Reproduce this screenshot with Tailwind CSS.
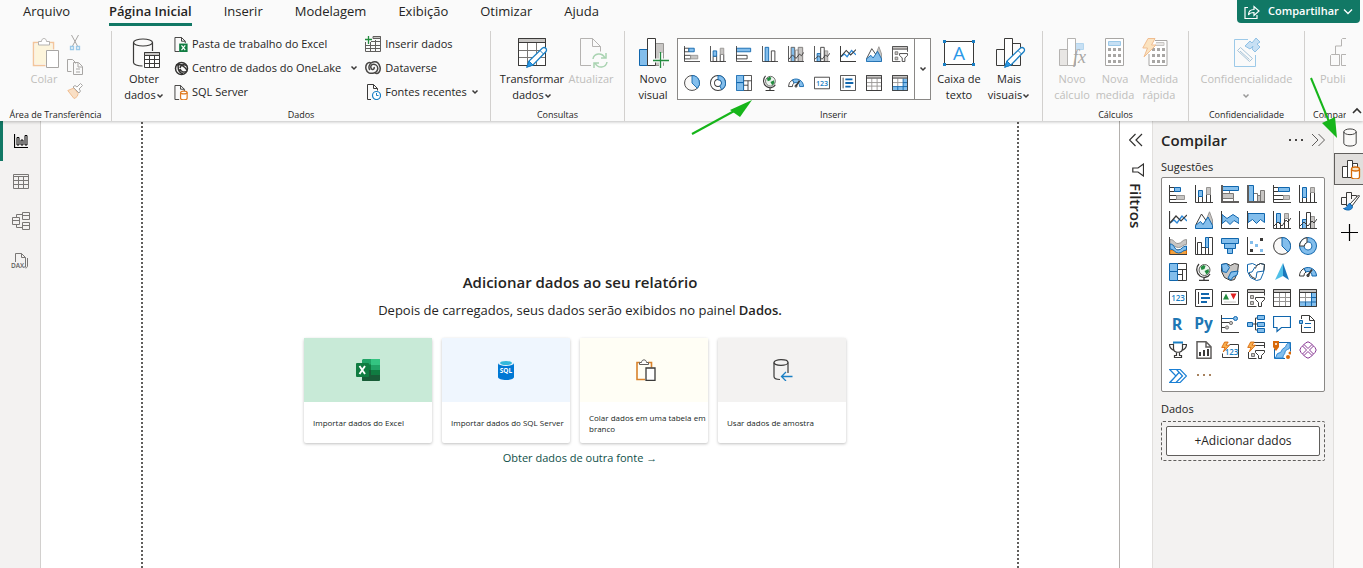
<!DOCTYPE html>
<html lang="pt-BR">
<head>
<meta charset="utf-8">
<meta name="viewport" content="width=device-width, initial-scale=1">
<title>Relatório</title>
<script src="https://cdn.jsdelivr.net/npm/@tailwindcss/browser@4"></script>
</head>
<body class="flex h-screen flex-col overflow-hidden bg-white font-['Open_Sans','Noto_Sans',sans-serif] text-[11px] text-[#252423]">

<!-- Icon library -->
<svg class="hidden" fill="none" stroke="#3b3a39" aria-hidden="true">
  <symbol id="sbar" viewBox="0 0 18 18"><path d="M.5 2.5h5v4h-5zM.5 10.5h7v4h-7z"/><path d="M5.5 2.5h6v4h-6z" fill="#83beec" stroke="#1066ad"/><path d="M7.5 10.5h8v4h-8z" fill="#c8c6c4" stroke="#979593"/><path d="M.5 0v17.5H18"/></symbol>
  <symbol id="scol" viewBox="0 0 18 18"><path d="M3.5 11.5h4v6h-4zM11.5 9.5h4v8h-4z"/><path d="M3.5 5.5h4v6h-4z" fill="#83beec" stroke="#1066ad"/><path d="M11.5 2.5h4v7h-4z" fill="#c8c6c4" stroke="#979593"/><path d="M.5 0v17.5H18"/></symbol>
  <symbol id="cbar" viewBox="0 0 18 18"><path d="M.5 10.5h12v4H.5z"/><path d="M.5 2.5h16v4H.5z" fill="#83beec" stroke="#1066ad"/><path d="M.5 0v17.5H18"/></symbol>
  <symbol id="ccol" viewBox="0 0 18 18"><path d="M10.5 5.500h4v12h-4z"/><path d="M3.500 1.500h4v16h-4z" fill="#83beec" stroke="#1066ad"/><path d="M.5 0v17.5H18"/></symbol>
  <symbol id="cbar2" viewBox="0 0 18 18"><path d="M.5 5.500h8v3h-8zM.5 13.500h12v3h-12z" fill="#fff" stroke="#797775"/><path d="M.5 8.500h12v5h-12z" fill="#c8c6c4" stroke="#797775"/><path d="M.5 1.500h17v4H.5z" fill="#83beec" stroke="#1066ad"/><path d="M1 0v17H18" stroke="#605e5c" stroke-width="2"/></symbol>
  <symbol id="ccol2" viewBox="0 0 18 18"><path d="M6.500 8.500h4v8h-4z" fill="#fff" stroke="#797775"/><path d="M10.500 10.500h3v6h-3zM13.500 5.500h4v11h-4z" fill="#c8c6c4" stroke="#797775"/><path d="M1.500.5h5v16h-5z" fill="#83beec" stroke="#1066ad"/><path d="M1 0v17H18" stroke="#605e5c" stroke-width="2"/></symbol>
  <symbol id="pbar" viewBox="0 0 18 18"><path d="M.5 2.500h5v4h-5zM.5 10.500h10v4h-10z"/><path d="M5.500 2.500h11v4h-11z" fill="#83beec" stroke="#1066ad"/><path d="M10.500 10.500h6v4h-6z" fill="#c8c6c4" stroke="#979593"/><path d="M.5 0v17.5H18"/></symbol>
  <symbol id="pcol" viewBox="0 0 18 18"><path d="M3.500 12.500h4v5h-4zM11.500 7.500h4v10h-4z"/><path d="M3.500 2.500h4v10h-4z" fill="#83beec" stroke="#1066ad"/><path d="M11.500 2.500h4v5h-4z" fill="#c8c6c4" stroke="#979593"/><path d="M.5 0v17.5H18"/></symbol>
  <symbol id="line" viewBox="0 0 18 18"><path d="M1 12l4-3 3 3 5-7 5 5" stroke="#2b88d8" stroke-width="1.400"/><path d="M1 12l6-7 5 5 6-6M.5 0v17.5H18" stroke-width="1.200"/></symbol>
  <symbol id="area" viewBox="0 0 18 18"><path d="M8 17L14.500.8 17.500 9v8z" fill="#c8c6c4" stroke="#979593"/><path d="M.5 14.500L6.500 3l7 10" fill="#fff"/><path d="M.5 17.500v-3l5-4 2.500 3 5-7.500 4.500 8.500v3z" fill="#83beec" stroke="#1066ad"/></symbol>
  <symbol id="sarea" viewBox="0 0 18 18"><path d="M1 3.500l5 4 6-4 6 4v5l-5-3-4 4-4-4-4 3z" fill="#83beec" stroke="#1066ad"/><path d="M.5 0v17.500H18"/></symbol>
  <symbol id="parea" viewBox="0 0 18 18"><path d="M1 2.500h16.500v9l-4-3-4 4-4-4-4.500 3z" fill="#83beec" stroke="#1066ad"/><path d="M.5 0v17.500H18"/></symbol>
  <symbol id="lstack" viewBox="0 0 18 18"><path d="M3.500 11.500h4v6h-4zM11.500 7.500h4v10h-4z" fill="#fff"/><path d="M3.500 2.500h4v9h-4z" fill="#83beec" stroke="#1066ad"/><path d="M11.500 2.500h4v5h-4z" fill="#c8c6c4" stroke="#979593"/><path d="M.5 0v17.500H18M1 15l4-4 4 4 4-6 2 2 3-4"/></symbol>
  <symbol id="lstack2" viewBox="0 0 18 18"><path d="M3.500 1.500h4v16h-4z" fill="#83beec" stroke="#605e5c"/><path d="M8.500 4.500h3v13h-3z" fill="#f3f2f1" stroke="#979593"/><path d="M11.500 1.500h5v16h-5z" fill="#c8c6c4" stroke="#797775"/><path d="M.5 0v17.500H18M1 15l4-5 4 4 4-5 2 2 3-4"/></symbol>
  <symbol id="lclus" viewBox="0 0 18 18"><path d="M3.500 8.500h4v9h-4z" fill="#83beec" stroke="#1066ad"/><path d="M11.500 5.500h4v12h-4z" fill="#c8c6c4" stroke="#979593"/><path d="M7.500 1.500h4v16h-4z" fill="#fff"/><path d="M.5 0v17.500H18M1 15l4-4 4 4 4-5 2 2 3-4"/></symbol>
  <symbol id="ribbon" viewBox="0 0 18 18"><path d="M1 2.500c5 0 4 4 8 4s4-4 8.500-4v5c-4 0-4 3-8 3s-4-3-8.500-3z" fill="#c8c6c4" stroke="#979593"/><path d="M1 13h16.500v4.500H1z" fill="#f2a03d" stroke="#d86b06"/><path d="M1 7c5 0 4 6 8 6s4-4 8.500-4v4c-4 0-4 3-8 3s-4-4-8.500-4z" fill="#83beec" stroke="#1066ad"/><path d="M.5 0v17.500H18"/></symbol>
  <symbol id="wfall" viewBox="0 0 18 18"><path d="M2.500 5.500h4v12h-4zM13.500.5h4v17h-4z" fill="#fff"/><path d="M10.500.5h3v10h-3z" fill="#83beec" stroke="#1066ad"/><path d="M.5 0v17.500H18M6.500 10.500h4v7"/></symbol>
  <symbol id="funnel" viewBox="0 0 18 18"><path d="M.5 1.500h17v5h-17zM3.500 6.500h11v5h-11zM6.500 11.500h5v5h-5z" fill="#83beec" stroke="#1066ad"/></symbol>
  <symbol id="scatter" viewBox="0 0 18 18"><path d="M.5 0v17.500H18"/><path d="M3 4h3v3H3zM8 7h3v3H8zM13 12h3v3h-3z" fill="#83beec" stroke="none"/><path d="M13 1h3v3h-3zM3 12h3v3H3z" fill="#3b3a39" stroke="none"/></symbol>
  <symbol id="pie" viewBox="0 0 18 18"><circle cx="9" cy="9" r="8.400" fill="#faf9f8"/><path d="M9 .6V9l6 6A8.400 8.400 0 0 0 9 .6z" fill="#83beec" stroke="#1066ad"/></symbol>
  <symbol id="donut" viewBox="0 0 18 18"><circle cx="9" cy="9" r="6.200" stroke="#1066ad" stroke-width="5.600"/><circle cx="9" cy="9" r="6.200" stroke="#83beec" stroke-width="3.600"/><path d="M.6 9A8.400 8.400 0 0 1 8 .6v5A3.600 3.600 0 0 0 5.400 9z" fill="#fff"/></symbol>
  <symbol id="donut2" viewBox="0 0 18 18"><circle cx="9" cy="9" r="6.200" stroke="#3b3a39" stroke-width="5.600"/><circle cx="9" cy="9" r="6.200" stroke="#fff" stroke-width="3.600"/><path d="M9 .6A8.400 8.400 0 0 1 13 16.400l-2-4.200A3.600 3.600 0 0 0 9 5.400z" fill="#83beec" stroke="#1066ad"/></symbol>
  <symbol id="tree" viewBox="0 0 18 18"><path d="M8.500.5h9v17h-9zM8.500 6.500h9M13.500 6.500v11M8.500 11.500h5" fill="#fff"/><path d="M.5.5h8v8h-8zM.5 8.500h8v9h-8z" fill="#83beec" stroke="#1066ad"/></symbol>
  <symbol id="globe" viewBox="0 0 18 18"><circle cx="9.500" cy="7" r="5.500" fill="#edf5ee" stroke="#605e5c"/><path d="M5.500 4l3-2 2 1-1 3-3 1zM9.500 8l4-2 .5 3-2.500 2.500z" fill="#238c3f" stroke="none"/><path d="M4 1a8 8 0 0 0 1 12c3 2 8 2 10-2M9 14v3M4 17.500h10" stroke-width="1.300"/></symbol>
  <symbol id="fmap" viewBox="0 0 18 18"><path d="M.5 1.500l5-1 4 2 4-2 4 1-1 8-3 7-4 1-6-3-3-6z" fill="#c8c6c4"/><path d="M.5 1.500l5-1 3 4-3 5-4-1zM10 9l7-1-1 4-4 2-2 3-3-2z" fill="#83beec" stroke="#1066ad"/></symbol>
  <symbol id="smap" viewBox="0 0 18 18"><path d="M.5 1.500l5-1 4 2 4-2 4 1-1 8-3 7-4 1-6-3-3-6z" fill="#fff" stroke="#1066ad"/><path d="M8 4l-3 5-3 .5M9 15l1-6 7-1" stroke="#1066ad"/><path d="M8.500 5.500l1-3 4-2 4 1-.5 6M2 10l3 4 4 2"/></symbol>
  <symbol id="azure" viewBox="0 0 18 18"><path d="M10 0L2 17l8-4z" fill="#50c0e8" stroke="none"/><path d="M10 0l6 17-6-4z" fill="#1a78bc" stroke="none"/></symbol>
  <symbol id="gauge" viewBox="0 0 18 18"><path d="M.5 13A8.500 8.500 0 0 1 5 5.500l2 3.500a4 4 0 0 0-2 4z" fill="#fff"/><path d="M5 5.500A8.500 8.500 0 0 1 17.500 13H13a4 4 0 0 0-6-4z" fill="#83beec" stroke="#1066ad"/><path d="M8.500 13L13 6.500" stroke-width="1.800"/><circle cx="9" cy="12.500" r="1.200"/></symbol>
  <symbol id="card" viewBox="0 0 18 18"><path d="M.5 2.500h17v13h-17z" fill="#fff"/><text x="9" y="12" text-anchor="middle" font-family="Open Sans" font-size="8" font-weight="600" fill="#1a7fc4" stroke="none">123</text></symbol>
  <symbol id="multi" viewBox="0 0 18 18"><path d="M.5.5h17v17h-17zM3.500 3v12" fill="#fff"/><path d="M6 5h8M6 9h9M6 13h6" stroke="#1066ad" stroke-width="2"/></symbol>
  <symbol id="kpi" viewBox="0 0 18 18"><path d="M.5 2.500h17v13h-17z" fill="#fff"/><path d="M2 10.500l3-6 3 6z" fill="#238c3f" stroke="none"/><path d="M9.500 4.500h6l-3 6z" fill="#e02020" stroke="none"/><path d="M3 13h12" stroke="#c8c6c4"/></symbol>
  <symbol id="slicer" viewBox="0 0 18 18"><path d="M.5.5h17v3h-17z" fill="#c8c6c4"/><path d="M.5 3.500v14h9M17.500 3.500v3"/><path d="M3.500 6.500h3v3h-3zM3.500 12.500h3v3h-3z" fill="#c8c6c4" stroke="#797775"/><path d="M8.500 8.500h9v2l-3 3v4h-3v-4l-3-3z" fill="#fff"/></symbol>
  <symbol id="table" viewBox="0 0 18 18"><path d="M.5.5h17v17h-17z" fill="#fff"/><path d="M.5 8.500h17M.5 12.500h17M6.500 4v13M12.500 4v13" stroke="#979593"/><path d="M.5.5h17v3h-17z" fill="#c8c6c4"/><path d="M.5 3v14.500h17V3"/></symbol>
  <symbol id="matrix" viewBox="0 0 18 18"><path d="M.5.5h17v17h-17z" fill="#fff"/><path d="M12.500 4h5v13.500H.5v-4h12z" fill="#83beec" stroke="none"/><path d="M.5 8.500h12M6.500 4v9" stroke="#979593"/><path d="M12.500 4v13.500M.5 13h17M12.500 8.500h5M6.500 13v4.500" stroke="#1066ad"/><path d="M.5.5h17v3h-17z" fill="#c8c6c4"/><path d="M.5 3v14.500h17V3"/></symbol>
  <symbol id="rlang" viewBox="0 0 18 18"><text x="8" y="15" text-anchor="middle" font-family="Open Sans" font-size="16" font-weight="700" fill="#2077b4" stroke="none">R</text></symbol>
  <symbol id="py" viewBox="0 0 18 18"><text x="8.500" y="13.500" text-anchor="middle" font-family="Open Sans" font-size="15.500" font-weight="700" fill="#2077b4" stroke="none">Py</text></symbol>
  <symbol id="infl" viewBox="0 0 18 18"><path d="M.5 0v17.500H18M.5 7.500h8M.5 12.500h4"/><path d="M1 3.500h11" stroke="#1066ad"/><circle cx="14.500" cy="3.500" r="2" fill="#83beec" stroke="#1066ad"/><circle cx="10" cy="8" r="1.600" fill="#c8c6c4" stroke="#797775"/><circle cx="6" cy="12.500" r="1.600" fill="#c8c6c4" stroke="#797775"/></symbol>
  <symbol id="dtree" viewBox="0 0 18 18"><path d="M5 9h6M8.500 3v12M8.500 3h3M8.500 15h3"/><path d="M.5 7.500h5v4h-5zM10.500.5h7v4h-7zM10.500 7.500h7v4h-7zM10.500 13.500h7v4h-7z" fill="#83beec" stroke="#1066ad"/></symbol>
  <symbol id="qa" viewBox="0 0 18 18"><path d="M.5 1.500h17v11h-9l-4.500 4v-4h-3.500z" fill="#fff" stroke="#1066ad" stroke-width="1.200"/></symbol>
  <symbol id="narr" viewBox="0 0 18 18"><path d="M2.500 4V.5h8l5 5v12h-13v-8M10.500.5v5h5"/><path d="M.5 5.500h3v3h-3z" fill="#83beec" stroke="#1066ad"/><path d="M6 8.500h6M5 12.500h7" stroke="#1066ad"/></symbol>
  <symbol id="trophy" viewBox="0 0 18 18"><path d="M4.500 2.500v5c0 5 9 5 9 0v-5M4.500 3.500h-4c0 4 2 5 5 6M13.500 3.500h4c0 4-2 5-5 6M7.500 11v3.500h-2v2h7v-2h-2V11" stroke-width="1.200"/><path d="M4 1.500h10" stroke="#1a7fc4" stroke-width="2"/></symbol>
  <symbol id="prep" viewBox="0 0 18 18"><path d="M2 .8h9l5 5v11.400H2zM11 1v5h5" fill="#fff" stroke="#605e5c" stroke-width="1.500"/><path d="M5 15v-4M9 15V9M13 15V8" stroke-width="2"/></symbol>
  <symbol id="bolt" viewBox="0 0 10 12"><path d="M4 .5h4L5.500 4h4l-7 7.500 2-5H.8z" fill="#f9b050" stroke="#d8690a"/></symbol>
  <symbol id="bcard" viewBox="0 0 18 18"><path d="M8.500 3.500h9v13h-16v-4" fill="#fff"/><text x="10.500" y="14" text-anchor="middle" font-family="Open Sans" font-size="8" font-weight="600" fill="#1a7fc4" stroke="none">123</text><use href="#bolt" x="0" y="0" width="9" height="12"/></symbol>
  <symbol id="bslicer" viewBox="0 0 18 18"><path d="M7 1.500h10.500v3H7M1.500 11v6.500h8M17.500 4v3"/><path d="M4.500 12.500h3v3h-3z" fill="#c8c6c4" stroke="#797775"/><path d="M8.500 9.500h9v2l-3 3v3h-3v-3l-3-3z" fill="#fff"/><use href="#bolt" x="0" y="0" width="9" height="12"/></symbol>
  <symbol id="arcgis" viewBox="0 0 18 18"><path d="M2 1.500h15.500v9M1.500 8v9.500H12" stroke="#1066ad"/><path d="M17 2c-5 0-3 4-6 5s-2 5-5 5-2 4-4 5h8c0-4 2-3 2-6s5-2 5-5z" fill="#83beec" stroke="#2b88d8"/><path d="M0 0h6v6L3 10 0 6z" fill="#d8690a" stroke="none"/><circle cx="3" cy="3" r="1" fill="#fff" stroke="none"/><circle cx="17" cy="12" r="1.500" fill="#d8690a" stroke="none"/><circle cx="15" cy="16" r="2" fill="#d8690a" stroke="none"/></symbol>
  <symbol id="papps" viewBox="0 0 18 18"><path d="M6.500 2L9 .8 11.500 2 16 6.500l1.200 2.500-1.200 2.500-4.500 4.500L9 17.200 6.500 16 2 11.500.8 9 2 6.500zM5 3.500L9 7.500l4-4M5 14.500l4-4 4 4M3.500 5L7.500 9l-4 4M14.500 5l-4 4 4 4" stroke="#8a3a95"/></symbol>
  <symbol id="pauto" viewBox="0 0 18 18"><path d="M.7 2.500h10.500L17.500 9l-6.300 6.500H.7L7 9zM7.500 2.500L13.500 9 7 15.500M10 5.500L1 15.500" stroke="#1a7fd4" stroke-width="1.200"/></symbol>
  <symbol id="more" viewBox="0 0 18 18"><path d="M2 8h2M8 8h2M14 8h2" stroke="#8a5a2b" stroke-width="1.500"/></symbol>
  <symbol id="chev" viewBox="0 0 8 6"><path d="M1.500 1.500L4 4l2.500-2.500" stroke="#3b3a39" stroke-width="1.500"/></symbol>
  <symbol id="cyl" viewBox="0 0 16 20"><ellipse cx="8" cy="4" rx="6.500" ry="3"/><path d="M1.500 4v12c0 4 13 4 13 0V4"/></symbol>
  <symbol id="pencil" viewBox="0 0 22 22"><path d="M1 21l2-6L16.500 2c2.500-1.500 5 1 3.500 3.500L7 19z" fill="#fff" stroke="#1a7fc4" stroke-width="1.300"/><path d="M1 21l2-6 4 4z" fill="#2b98e8" stroke="#1a7fc4"/><path d="M14 4.500L17.500 8" stroke="#1a7fc4"/></symbol>
</svg>

<header class="relative z-10 shrink-0 bg-[#fafafa] shadow-[0_1px_3px_rgba(0,0,0,0.25)]">
  <div class="flex items-start justify-between">
    <nav class="flex h-[26px] items-start pl-[23px] text-[13px] leading-[23px]" aria-label="Guias">
      <button class="mr-[39px]">Arquivo</button>
      <button class="mr-8 border-b-3 border-[#117865] font-semibold">Página Inicial</button>
      <button class="mr-8">Inserir</button>
      <button class="mr-8">Modelagem</button>
      <button class="mr-8">Exibição</button>
      <button class="mr-8">Otimizar</button>
      <button>Ajuda</button>
    </nav>
    <button class="mr-[3px] flex h-[23px] w-[123px] items-center gap-2 rounded-b-sm bg-[#117865] pl-[7px] text-[11px] font-semibold text-white">
      <svg class="size-4" viewBox="0 0 16 16" fill="none" stroke="#fff" stroke-width="1.200"><path d="M4 3.500H1v11h12V11M4.500 11c0-4 2-5.500 5.500-5.500V2.500L15 7l-5 4.500V8.500c-3 0-4.500.5-5.500 2.500z"/></svg>
      <span class="whitespace-nowrap">Compartilhar</span>
      <svg class="-ml-1 h-2 w-2.5 shrink-0" viewBox="0 0 10 7" fill="none" stroke="#fff" stroke-width="1.300"><path d="M1 1l4 4 4-4"/></svg>
    </button>
  </div>

  <div class="flex items-start overflow-hidden pt-[5px]">
    <section class="flex h-[90px] w-[112px] shrink-0 flex-col justify-between border-r border-[#d2d0ce] pt-[7px]" aria-label="Área de Transferência">
      <div class="flex pl-7">
        <button class="flex w-8 flex-col items-center gap-[3px] leading-4 text-[#c0bebc]" disabled>
          <svg class="ml-1 h-[30px] w-7" viewBox="0 0 28 30" fill="none"><path d="M6 4.500H1.500v23h12M17 4.500h4.500v7" stroke="#f3c59b" stroke-width="1.500"/><path d="M3 6h17v6h-6v14H3z" fill="#fdf5dc"/><path d="M6.500 7V3.500h3c0-4 5-4 5 0h3V7z" fill="#fff" stroke="#b5b3b1"/><path d="M14.500 12.500h12v17h-12z" fill="#fff" stroke="#a8a6a4"/></svg>
          <span>Colar</span>
        </button>
        <div class="-mt-[3px] ml-[7px] flex flex-col gap-2">
          <button aria-label="Recortar" class="flex size-4 justify-center" disabled><svg class="size-4" viewBox="0 0 16 16" fill="none"><path d="M4.500 0l6 11M11.500 0l-6 11" stroke="#a8a6a4"/><path d="M3.500 11.500h3v3h-3zM9.500 11.500h3v3h-3z" stroke="#9cc9e8" stroke-width="1.300"/></svg></button>
          <button aria-label="Copiar" class="flex size-4" disabled><svg class="size-4" viewBox="0 0 16 16" fill="none" stroke="#a8a6a4"><path d="M4.500 12.500h-4V.5h5l3 3v1M6.500 3.500h5l4 4v8h-9zM11 4v4h4M9 10h4M9 13h4"/></svg></button>
          <button aria-label="Pincel" class="flex size-4" disabled><svg class="size-4" viewBox="0 0 16 16" fill="none"><path d="M7 5L.8 7.500 7 15.500c3-1 4-3 4-5z" fill="#f9dfc5" stroke="#f0bd90"/><path d="M6 4l6 6 1.500-2-1.500-2 3.500-3.500-2-2L10 4 8 2.500z" fill="#fff" stroke="#a8a6a4"/></svg></button>
        </div>
      </div>
      <div class="text-center text-[9px] leading-3">Área de Transferência</div>
    </section>

    <section class="flex h-[90px] w-[379px] shrink-0 flex-col justify-between border-r border-[#d2d0ce] pt-[7px]" aria-label="Dados">
      <div class="flex pl-[7px]">
        <button class="flex w-[50px] flex-col items-center gap-[3px] leading-4">
          <svg class="ml-1 h-[30px] w-7" viewBox="0 0 28 30" fill="none" stroke="#3b3a39"><ellipse cx="11" cy="4.500" rx="9.500" ry="3.500" stroke-width="1.200"/><path d="M1.500 4.500v20c0 2 4 3.500 9 3.500M20.500 4.500V13" stroke-width="1.200"/><path d="M12.500 14.500h15v15h-15z" fill="#fff"/><path d="M12.500 14.500h15v3h-15z" fill="#c8c6c4"/><path d="M12.500 21.500h15M12.500 25.500h15M17.500 18v11M22.500 18v11"/></svg>
          <span class="whitespace-nowrap">Obter<br>dados<svg class="inline h-1.5 w-2" fill="none"><use href="#chev"/></svg></span>
        </button>
        <div class="-mt-0.5 ml-[5px] flex flex-col">
          <button class="mb-2 flex h-4 items-center gap-[3px]"><svg class="size-[15px]" viewBox="0 0 15 16" fill="none"><path d="M5 15.500H.5V.5h7l4 4v2M7.500.5v4h4" stroke="#3b3a39"/><path d="M5 7h9v9H5z" fill="#107c41"/><path d="M7.500 9l4 5M11.500 9l-4 5" stroke="#fff" stroke-width="1.300"/></svg>Pasta de trabalho do Excel</button>
          <button class="mb-2 flex h-4 items-center gap-[3px]"><svg class="size-[15px]" viewBox="0 0 15 15" fill="none" stroke="#323130" stroke-width="1.500"><circle cx="7.500" cy="7.500" r="6"/><path d="M2 4c3-1 7 0 11 5M5 2c-2 4-1 9 4 11M6 7c1-4 5-4 7-2M6 8c1 3 4 4 7 2"/></svg>Centro de dados do OneLake<svg class="ml-1.5 h-1.5 w-2" fill="none"><use href="#chev"/></svg></button>
          <button class="flex h-4 items-center gap-[3px]"><svg class="size-[15px]" viewBox="0 0 15 16" fill="none"><path d="M5 15.500H.5V.5h6l4 4v2M6.500.5v4h4" stroke="#3b3a39"/><path d="M6.500 8v6c0 2.500 7 2.500 7 0V8" fill="#fff" stroke="#e07b20" stroke-width="1.300"/><ellipse cx="10" cy="8" rx="3.500" ry="1.500" fill="#fff" stroke="#e07b20" stroke-width="1.300"/></svg>SQL Server</button>
        </div>
        <div class="-mt-0.5 ml-[7px] flex flex-col">
          <button class="mb-2 flex h-4 items-center gap-1"><svg class="size-4" viewBox="0 0 16 16" fill="none" stroke="#605e5c"><path d="M.5 6v9.500h15V.5H8M.5 9.500h15M.5 12.500h15M5.500 6v9M10.500 4v11M6 5.500h10" /><path d="M8 .5h7.500v2H8z" fill="#c8c6c4"/><path d="M3.500 0v8M0 3.500h7" stroke="#238c3f" stroke-width="1.300"/></svg>Inserir dados</button>
          <button class="mb-2 flex h-4 items-center gap-1"><svg class="size-4" viewBox="0 0 16 16" fill="none" stroke="#484644" stroke-width="1.500"><path d="M6 3C3 1 0 5 1 9s4 5 8 4 5-6 2-8-6 0-5 3 4 1 3-1"/><path d="M10 13c3 2 6-2 5-6s-3-6-7-5-5 6-3 8"/></svg>Dataverse</button>
          <button class="flex h-4 items-center gap-1"><svg class="ml-0.5 h-4 w-[14px]" viewBox="0 0 14 16" fill="none"><path d="M4 15.500H.5V.5h6l4 4v2M6.500.5v4h4" stroke="#3b3a39"/><circle cx="9.500" cy="11.500" r="4" fill="#fff" stroke="#1a7fc4" stroke-width="1.200"/><path d="M9.500 9v2.500h2" stroke="#1a7fc4"/></svg>Fontes recentes<svg class="h-1.5 w-2" fill="none"><use href="#chev"/></svg></button>
        </div>
      </div>
      <div class="text-center text-[9px] leading-3">Dados</div>
    </section>

    <section class="flex h-[90px] w-[134px] shrink-0 flex-col justify-between border-r border-[#d2d0ce] pt-[7px]" aria-label="Consultas">
      <div class="flex pl-2">
        <button class="flex w-[66px] flex-col items-center gap-[3px] leading-4">
          <svg class="ml-0.5 h-[30px] w-[30px]" viewBox="0 0 30 30" fill="none" stroke="#3b3a39"><path d="M.5.5h27v27H.5z" fill="#fff"/><path d="M.5 12.500h27M.5 19.500h27M9.500 5v22M18.500 5v22" stroke="#797775"/><path d="M.5.5h27v4H.5z" fill="#c8c6c4"/><path d="M.5 4v23.500h27V4"/><use href="#pencil" x="8" y="8" width="22" height="22"/></svg>
          <span>Transformar<br>dados<svg class="inline h-1.5 w-2" fill="none"><use href="#chev"/></svg></span>
        </button>
        <button class="flex w-[52px] flex-col items-center gap-[3px] leading-4 text-[#c0bebc]" disabled>
          <svg class="ml-1.5 h-[30px] w-7" viewBox="0 0 28 30" fill="none"><path d="M11 27.500H.5V.5h12l8 8v5M12.500.5v8h8" stroke="#b5b3b1"/><path d="M13 21c1-6 9-7 12-1m1-5v5h-5M27 24c-1 6-9 7-12 1m-1 5v-5h5" stroke="#a9d3b1" stroke-width="1.500"/></svg>
          <span>Atualizar</span>
        </button>
      </div>
      <div class="text-center text-[9px] leading-3">Consultas</div>
    </section>

    <section class="flex h-[90px] w-[418px] shrink-0 flex-col justify-between border-r border-[#d2d0ce] pt-[7px]" aria-label="Inserir">
      <div class="flex pl-2">
        <button class="flex w-10 flex-col items-center gap-[3px] leading-4">
          <svg class="ml-0.5 h-[30px] w-[30px]" viewBox="0 0 30 30" fill="none"><path d="M.5 11.500h8v16h-8z" fill="#83beec" stroke="#1066ad"/><path d="M16.500 5.500h8v22h-8z" fill="#c8c6c4" stroke="#979593"/><path d="M8.500.5h8v27h-8z" fill="#fff" stroke="#3b3a39"/><path d="M22 15v15M14 22.500h16" stroke="#fafafa" stroke-width="4"/><path d="M21.500 14v16M14 22.500h16" stroke="#238c3f" stroke-width="1.300"/></svg>
          <span>Novo<br>visual</span>
        </button>
        <div class="ml-[4px] flex h-[62px] border border-[#8a8886] bg-white">
          <div class="grid grid-cols-[repeat(9,26px)] grid-rows-[repeat(2,29px)] px-px" id="quick"></div>
          <button aria-label="Mais visualizações" class="flex w-4 items-center justify-center border-l border-[#8a8886]"><svg class="h-1.5 w-2" fill="none"><use href="#chev"/></svg></button>
        </div>
        <button class="ml-[3px] flex w-[50px] flex-col items-center gap-[3px] whitespace-nowrap leading-4">
          <svg class="h-[30px] w-8" viewBox="0 0 32 30" fill="none"><path d="M1.500 3.500h29v23h-29z" fill="#fff" stroke="#3b3a39"/><path d="M0 2h3v3H0zM29 2h3v3h-3zM0 25h3v3H0zM29 25h3v3h-3z" fill="#1a7fc4"/><text x="16" y="22" text-anchor="middle" font-family="Open Sans" font-size="19" fill="#2b98e8">A</text></svg>
          <span>Caixa de<br>texto</span>
        </button>
        <button class="flex w-[50px] flex-col items-center gap-[3px] leading-4">
          <svg class="ml-1 h-[30px] w-[30px]" viewBox="0 0 30 30" fill="none" stroke="#3b3a39"><path d="M.5 11.500h8v16h-8zM16.500 5.500h8v22h-8z"/><path d="M8.500.5h8v27h-8z" fill="#fff"/><use href="#pencil" x="8" y="8" width="22" height="22"/></svg>
          <span class="whitespace-nowrap">Mais<br>visuais<svg class="inline h-1.5 w-2" fill="none"><use href="#chev"/></svg></span>
        </button>
      </div>
      <div class="text-center text-[9px] leading-3">Inserir</div>
    </section>

    <section class="flex h-[90px] w-[146px] shrink-0 flex-col justify-between border-r border-[#d2d0ce] pt-[7px] text-[#c0bebc]" aria-label="Cálculos">
      <div class="flex pl-2">
        <button class="flex w-[42px] flex-col items-center gap-[3px] leading-4" disabled>
          <svg class="ml-0.5 h-[30px] w-[28px]" viewBox="0 0 28 30" fill="none" stroke="#b5b3b1"><path d="M.5 11.500h8v16h-8z" fill="#e8e6e4"/><path d="M16.500 5.500h8v6h-8" fill="#c7e0f4" stroke="#b4d6ee"/><path d="M8.500.5h8v27h-8z" fill="#fff"/><text x="14" y="25" font-family="Liberation Serif" font-style="italic" font-size="18" fill="#a8a6a4" stroke="none">fx</text></svg>
          <span>Novo<br>cálculo</span>
        </button>
        <button class="flex w-[44px] flex-col items-center gap-[3px] leading-4" disabled>
          <svg class="h-[30px] w-5" viewBox="0 0 20 30" fill="none"><path d="M.5.500h18v27h-18z" fill="#fff" stroke="#a8a6a4"/><path d="M3.500 3.500h12v4h-12z" fill="#c7e0f4" stroke="#9cc9e8"/><path d="M3 11.500h14M3 17.500h14M3 23.500h14" stroke="#a8a6a4" stroke-width="3" stroke-dasharray="3 2"/></svg>
          <span>Nova<br>medida</span>
        </button>
        <button class="flex w-[44px] flex-col items-center gap-[3px] leading-4" disabled>
          <svg class="mr-2 h-[30px] w-[26px]" viewBox="0 0 26 30" fill="none"><path d="M13 2.500h12v25H7V16" fill="#fff" stroke="#a8a6a4"/><path d="M14 4.500h8v3h-9" fill="#e8e6e4" stroke="#c8c6c4"/><path d="M10 11.500h13M10 17.500h13M10 23.500h13" stroke="#a8a6a4" stroke-width="3" stroke-dasharray="3 2"/><path d="M6 .5h7L9.500 7H14L2 19l3.500-9H.8z" fill="#fbe3c0" stroke="#f0bd90"/></svg>
          <span>Medida<br>rápida</span>
        </button>
      </div>
      <div class="text-center text-[9px] leading-3 text-[#252423]">Cálculos</div>
    </section>

    <section class="flex h-[90px] w-[116px] shrink-0 flex-col justify-between border-r border-[#d2d0ce] pt-[7px]" aria-label="Confidencialidade">
      <div class="flex justify-center">
        <button class="flex flex-col items-center gap-[3px] leading-4 text-[#c0bebc]" disabled>
          <svg class="ml-1 h-[30px] w-7" viewBox="0 0 28 30" fill="none" stroke="#9cc9e8"><path d="M14 1.500H.5v27h21V17"/><path d="M3.500 12.500l3-3 12 11-3 3zM6 13l9.500 8.500" stroke="#a8c4d8"/><path d="M11 8l5-5 2 2 4-5 4 4-3 2 3 3-5 5-3-3 1-3-3 3z" fill="#c7e0f4" stroke="#8fc0e4"/></svg>
          <span class="flex flex-col items-center">Confidencialidade<svg class="mt-1.5 h-1.5 w-2 opacity-50" fill="none"><use href="#chev"/></svg></span>
        </button>
      </div>
      <div class="text-center text-[9px] leading-3">Confidencialidade</div>
    </section>

    <section class="flex h-[90px] w-[41px] shrink-0 flex-col justify-between overflow-hidden pt-[7px]" aria-label="Compartilhar">
      <button class="flex flex-col gap-[3px] pl-[15px] text-left leading-4 text-[#c0bebc]" disabled>
        <svg class="ml-2.5 h-[30px] w-[30px] shrink-0" viewBox="0 0 30 30" fill="none" stroke="#b5b3b1"><path d="M1.500 16.500h8v11h-9v-10zM5.500 16v-8h6M11.500 8V1.500l1-1h8M11.500 27.500h9v-11h-9z"/></svg>
        <span>Publicar</span>
      </button>
      <div class="pl-2 text-[9px] leading-3">Compartilhar</div>
    </section>
    <button aria-label="Recolher faixa de opções" class="mt-[76px] ml-1.5"><svg class="h-[7px] w-2.5" viewBox="0 0 10 7" fill="none" stroke="#323130" stroke-width="1.600"><path d="M1 6l4-4 4 4"/></svg></button>
  </div>
</header>

<div class="flex min-h-0 flex-1">
  <nav class="flex w-[41px] shrink-0 flex-col border-r border-[#d2d0ce] bg-[#f3f2f1]" aria-label="Exibições">
    <button aria-label="Exibição de relatório" class="flex h-10 items-center justify-center border-l-3 border-[#117865] pr-[2px]"><svg class="h-3.5 w-[14px]" viewBox="0 0 14 14" fill="none" stroke="#000"><path d="M.5 0v13.500H14" stroke-width="1.200"/><path d="M3 3.500h2v7.500H3zM7 6h2v5H7zM11 1.500h2V11h-2z"/></svg></button>
    <button aria-label="Exibição de tabela" class="flex h-10 items-center justify-center pl-px"><svg class="h-[15px] w-4" viewBox="0 0 16 15" fill="none" stroke="#797775"><path d="M.5.5h15v14H.5zM.5 2.500h15M.5 6.500h15M.5 10.500h15M5.500 3v12M10.500 3v12"/></svg></button>
    <button aria-label="Exibição de modelo" class="flex h-10 items-center justify-center pl-px"><svg class="h-[18px] w-[18px]" viewBox="0 0 18 18" fill="none" stroke="#797775"><path d="M.5 5.500h7v7h-7zM.5 8.500h7M10.500.5h7v7h-7zM10.500 3.500h7M10.500 10.500h7v7h-7zM10.500 13.500h7M4.500 5V2.500h6M4.500 13v2.500h6"/></svg></button>
    <button aria-label="Exibição de consulta DAX" class="flex h-10 items-center justify-center"><svg class="h-[18px] w-[18px]" viewBox="0 0 18 18" fill="none" stroke="#797775"><path d="M4.500 10V1.500h6l4 4V15h-2M10.500 1.500v4h4M16.500 6v8c0 1-1 2-2 2"/><text x="0" y="16" font-family="Open Sans" font-size="6.500" font-weight="600" fill="#605e5c" stroke="none">DAX</text></svg></button>
  </nav>

  <main class="flex min-w-0 flex-1">
    <div class="mx-25 flex flex-1 justify-between">
      <div class="w-0.5 shrink-0 bg-[repeating-linear-gradient(to_bottom,#ffffff_0_1px,#605e5c_1px_3px,#ffffff_3px_4px)]"></div>
      <div class="flex flex-1 flex-col items-center pt-[149px]">
        <h1 class="text-[15px] font-semibold leading-6">Adicionar dados ao seu relatório</h1>
        <p class="mt-1 text-[13px] leading-6">Depois de carregados, seus dados serão exibidos no painel <b class="font-semibold">Dados.</b></p>
        <div class="mt-4 mr-2.5 flex gap-2.5 text-[8px] font-medium leading-[11px] text-[#201f1e]">
          <button class="h-[105px] w-32 rounded-xs text-left shadow-[0_1px_3px_rgba(0,0,0,0.25)]">
            <span class="flex h-16 items-center justify-center bg-[#c8ead7]"><svg class="h-[22px] w-6" viewBox="0 0 24 22"><path d="M7 0h16a1 1 0 0 1 1 1v20a1 1 0 0 1-1 1H7a1 1 0 0 1-1-1V1z" fill="#21a366"/><path d="M6 11h9v11H7a1 1 0 0 1-1-1z" fill="#185c37"/><path d="M15 11h9v5h-9zM6 5.500h9V11H6z" fill="#107c41"/><path d="M15 0h8l1 1v5h-9z" fill="#33c481"/><path d="M15 16h9v5l-1 1h-8z" fill="#185c37"/><rect y="4" width="13" height="14" rx="1" fill="#107c41"/><path d="M3.500 7l5.500 8M9 7l-5.500 8" stroke="#fff" stroke-width="1.900"/></svg></span>
            <span class="flex h-[41px] items-center pl-[9px]">Importar dados do Excel</span>
          </button>
          <button class="h-[105px] w-32 rounded-xs text-left shadow-[0_1px_3px_rgba(0,0,0,0.25)]">
            <span class="flex h-16 items-center justify-center bg-[#eff6fe]"><svg class="h-5 w-4" viewBox="0 0 16 20"><path d="M0 3v14c0 4 16 4 16 0V3z" fill="#0078d4"/><ellipse cx="8" cy="3" rx="8" ry="3" fill="#e8f4fc"/><ellipse cx="8" cy="3" rx="6" ry="2" fill="#32b8db"/><text x="8" y="13" text-anchor="middle" font-family="Open Sans" font-size="6.500" font-weight="700" fill="#fff">SQL</text></svg></span>
            <span class="flex h-[41px] items-center pl-[9px] whitespace-nowrap">Importar dados do SQL Server</span>
          </button>
          <button class="h-[105px] w-32 rounded-xs text-left shadow-[0_1px_3px_rgba(0,0,0,0.25)]">
            <span class="flex h-16 items-center justify-center bg-[#fffef5]"><svg class="ml-1 h-[22px] w-5" viewBox="0 0 20 22" fill="none"><path d="M4 3.500H1v17h8M12 3.500h3.500v5" stroke="#d9822b" stroke-width="1.600"/><path d="M3.500 5.500V3.500h2c0-3.500 5-3.500 5 0h2v2z" fill="#fff" stroke="#605e5c"/><path d="M10 9h9v12.500h-9z" fill="#fff" stroke="#3b3a39" stroke-width="1.300"/></svg></span>
            <span class="flex h-[41px] items-center pl-[9px]">Colar dados em uma tabela em branco</span>
          </button>
          <button class="h-[105px] w-32 rounded-xs text-left shadow-[0_1px_3px_rgba(0,0,0,0.25)]">
            <span class="flex h-16 items-center justify-center bg-[#f3f2f1]"><svg class="ml-0.5 h-[22px] w-5" viewBox="0 0 20 22" fill="none"><ellipse cx="8" cy="3.500" rx="7" ry="2.800" stroke="#3b3a39" stroke-width="1.200"/><path d="M1 3.500v14c0 2 3 3 6 3M15 3.500V14" stroke="#3b3a39" stroke-width="1.200"/><path d="M19.500 17.500H9M13 13l-4.500 4.500L13 22" stroke="#1a7fc4" stroke-width="1.300"/></svg></span>
            <span class="flex h-[41px] items-center pl-[9px]">Usar dados de amostra</span>
          </button>
        </div>
        <a href="#" class="mt-[7px] font-medium leading-4 text-[#0f4f48]">Obter dados de outra fonte →</a>
      </div>
      <div class="w-0.5 shrink-0 bg-[repeating-linear-gradient(to_bottom,#ffffff_0_1px,#605e5c_1px_3px,#ffffff_3px_4px)]"></div>
    </div>
  </main>

  <aside class="flex w-[34px] shrink-0 flex-col items-center border-x border-r-[#e1dfdd] border-l-[#b3b0ad] pt-3" aria-label="Filtros">
    <button aria-label="Expandir filtros"><svg class="h-3.5 w-3.5" viewBox="0 0 14 14" fill="none" stroke="#323130" stroke-width="1.200"><path d="M6.500 1l-6 6 6 6M13 1L7 7l6 6"/></svg></button>
    <svg class="mt-4 ml-1 h-3.5 w-3" viewBox="0 0 12 14" fill="none" stroke="#323130" stroke-width="1.200"><path d="M11.500 1v12L6 9H.8V5H6z"/></svg>
    <h2 class="mt-1.5 text-[15px] font-semibold leading-4 [writing-mode:vertical-rl]">Filtros</h2>
  </aside>

  <aside class="flex w-[181px] shrink-0 flex-col border-r border-[#e1dfdd] bg-[#f3f2f1] px-2" aria-label="Compilar">
    <div class="flex h-[38px] items-center">
      <h2 class="flex-1 text-[15px] font-semibold">Compilar</h2>
      <button aria-label="Mais opções"><svg class="h-1 w-4" viewBox="0 0 16 4" fill="#484644"><path d="M1 1h2v2H1zM7 1h2v2H7zM13 1h2v2h-2z"/></svg></button>
      <button aria-label="Recolher painel" class="ml-[7px]"><svg class="h-3.5 w-3.5" viewBox="0 0 14 14" fill="none" stroke="#605e5c"><path d="M1 1l6 6-6 6M7.500 1l6 6-6 6"/></svg></button>
    </div>
    <h3 class="mb-0.5 leading-4">Sugestões</h3>
    <div class="grid grid-cols-6 rounded-xs border border-[#8a8886] bg-white px-[3px] pt-[3px] pb-0.5" id="gallery"></div>
    <h3 class="mt-2 leading-[18px]">Dados</h3>
    <div class="mt-[3px] rounded-xs border border-dashed border-[#605e5c] p-1">
      <button class="h-[30px] w-full rounded-xs border border-[#605e5c] bg-white text-[12px]">+Adicionar dados</button>
    </div>
  </aside>

  <nav class="flex w-[29px] shrink-0 flex-col overflow-hidden bg-[#faf9f8]" aria-label="Painéis">
    <button aria-label="Dados" class="flex h-8 items-center pl-2"><svg class="h-[19px] w-4 shrink-0" fill="none" stroke="#3b3a39"><use href="#cyl"/></svg></button>
    <button aria-label="Compilar" class="flex h-8 w-8 items-center border border-[#605e5c] bg-[#e1dfdd] pl-[7px]"><svg class="h-5 w-5 shrink-0" viewBox="0 0 20 20" fill="none" stroke="#3b3a39"><path d="M.5 7.500h5v11h-5zM5.500 1.500h5v17h-5zM10.500 4.500h5v4" fill="#fff"/><path d="M9.500 10v8c0 2.500 8 2.500 8 0v-8" fill="#fff" stroke="#d86b06" stroke-width="1.300"/><ellipse cx="13.500" cy="10" rx="4" ry="2" fill="#fbe3c0" stroke="#d86b06" stroke-width="1.300"/></svg></button>
    <button aria-label="Formatar" class="flex h-8 items-center pl-[7px]"><svg class="h-5 w-5 shrink-0" viewBox="0 0 20 20" fill="none" stroke="#3b3a39"><path d="M5 13.500H.5v-7h5M5.500 12V1.500h5V8M10.500 4.500h5v3M5.500 6v9"/><path d="M17.500 4L9 13l2 2 7.500-10z" fill="#fff"/><path d="M9 12.500c-3 0-2 5-6.500 5 3 2.500 9 2 9-2z" fill="#2b88d8" stroke="#1066ad"/></svg></button>
    <button aria-label="Adicionar" class="flex h-[30px] items-center pl-[7px]"><svg class="h-[17px] w-[17px]" viewBox="0 0 17 17" stroke="#000" stroke-width="1.200"><path d="M8.500 0v17M0 8.500h17"/></svg></button>
  </nav>
</div>

<!-- Callout arrows over the page -->
<svg class="pointer-events-none absolute top-[98px] left-[690px] z-20 h-[40px] w-[64px]" viewBox="0 0 64 40" aria-hidden="true"><path d="M2 36L46 12" stroke="#16b51a" stroke-width="2"/><path d="M40 12L62 2 50 19z" fill="#16b51a"/></svg>
<svg class="pointer-events-none absolute top-[76px] right-[22px] z-20 h-[66px] w-[32px]" viewBox="0 0 32 66" aria-hidden="true"><path d="M2 2l19 46" stroke="#16b51a" stroke-width="2"/><path d="M13 47l13-6 2 21z" fill="#16b51a"/></svg>

<script>
  const fill = (id, size, cell, items) => {
    document.getElementById(id).innerHTML = items.map(([icon, label]) =>
      `<button class="${cell}" aria-label="${label}"><svg class="${size}" fill="none" stroke="#3b3a39"><use href="#${icon}"/></svg></button>`).join('');
  };
  fill('quick', 'size-4', 'flex items-center justify-center', [
    ['sbar','Barras empilhadas'],['scol','Colunas empilhadas'],['cbar','Barras clusterizadas'],['ccol','Colunas clusterizadas'],['lstack2','Linhas e colunas empilhadas'],['lclus','Linhas e colunas clusterizadas'],['line','Linhas'],['area','Área'],['slicer','Segmentação'],
    ['pie','Pizza'],['donut2','Rosca'],['tree','Treemap'],['globe','Mapa'],['gauge','Medidor'],['card','Cartão'],['multi','Cartão de várias linhas'],['table','Tabela'],['matrix','Matriz']
  ]);
  fill('gallery', 'size-[18px]', 'flex h-[26px] items-center justify-center', [
    ['sbar','Barras empilhadas'],['scol','Colunas empilhadas'],['cbar2','Barras clusterizadas'],['ccol2','Colunas clusterizadas'],['pbar','Barras 100%'],['pcol','Colunas 100%'],
    ['line','Linhas'],['area','Área'],['sarea','Área empilhada'],['parea','Área 100%'],['lstack','Linhas e colunas empilhadas'],['lclus','Linhas e colunas clusterizadas'],
    ['ribbon','Faixa de opções'],['wfall','Cascata'],['funnel','Funil'],['scatter','Dispersão'],['pie','Pizza'],['donut','Rosca'],
    ['tree','Treemap'],['globe','Mapa'],['fmap','Mapa coroplético'],['smap','Mapa de formas'],['azure','Azure Maps'],['gauge','Medidor'],
    ['card','Cartão'],['multi','Cartão de várias linhas'],['kpi','KPI'],['slicer','Segmentação'],['table','Tabela'],['matrix','Matriz'],
    ['rlang','Visual R'],['py','Visual Python'],['infl','Influenciadores'],['dtree','Árvore hierárquica'],['qa','P e R'],['narr','Narrativa'],
    ['trophy','Metas'],['prep','Relatório paginado'],['bcard','Novo cartão'],['bslicer','Nova segmentação'],['arcgis','ArcGIS'],['papps','Power Apps'],
    ['pauto','Power Automate'],['more','Mais visuais']
  ]);
</script>
</body>
</html>
